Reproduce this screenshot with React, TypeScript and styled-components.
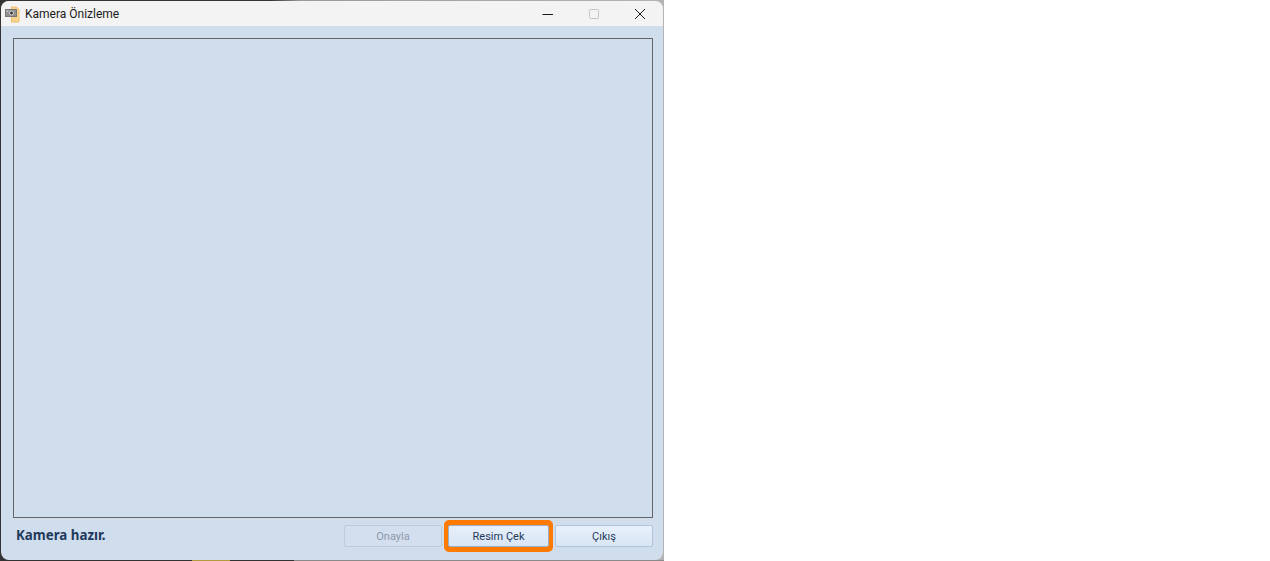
import React from 'react';
import styled, { createGlobalStyle } from 'styled-components';

const Global = createGlobalStyle`
  html, body {
    margin: 0;
    padding: 0;
    background: #fff;
  }
`;

const App: React.FC = () => (
  <>
    <Global />
    <Page>
      <Desktop>
        <Window>
          <TitleBar>
            <AppIcon />
            <Title>Kamera Önizleme</Title>
            <WindowControls>
              <ControlButton aria-label="Simge durumuna küçült">
                <svg width="12" height="12" viewBox="0 0 12 12"><path d="M0.5 6.5H11" stroke="#1a1a1a" fill="none" /></svg>
              </ControlButton>
              <ControlButton aria-label="Ekranı kapla">
                <svg width="12" height="12" viewBox="0 0 12 12"><rect x="1.5" y="1.5" width="9" height="9" rx="1" stroke="#c4c4c4" fill="none" /></svg>
              </ControlButton>
              <ControlButton aria-label="Kapat">
                <svg width="12" height="12" viewBox="0 0 12 12"><path d="M1 1L11 11M11 1L1 11" stroke="#1a1a1a" fill="none" /></svg>
              </ControlButton>
            </WindowControls>
          </TitleBar>
          <Body>
            <Preview />
            <Footer>
              <Status>Kamera hazır.</Status>
              <Actions>
                <ActionButton disabled>Onayla</ActionButton>
                <Highlight>
                  <ActionButton $focused>Resim Çek</ActionButton>
                </Highlight>
                <ActionButton>Çıkış</ActionButton>
              </Actions>
            </Footer>
          </Body>
        </Window>
      </Desktop>
    </Page>
  </>
);

const AppIcon: React.FC = () => (
  <IconBox>
    <svg width="16" height="18" viewBox="0 0 16 18">
      <path d="M6.5 2h5l2.5 2.5V17H6.5z" fill="#f8d18a" stroke="#efbf6e" strokeWidth="1" />
      <rect x="0.5" y="4.5" width="11" height="7" fill="#8f8f8f" stroke="#777" />
      <circle cx="6.5" cy="8" r="2" fill="#3a3a3a" stroke="#d8d8d8" />
      <rect x="1.5" y="5.5" width="2" height="1" fill="#ececec" />
    </svg>
  </IconBox>
);

const Page = styled.div`
  width: 1270px;
  height: 561px;
  overflow: hidden;
  background: #fff;
  font-family: Roboto, "Liberation Sans", sans-serif;
`;

/* what shows of the desktop behind the window's edges and round corners */
const Desktop = styled.div`
  width: 664px;
  height: 561px;
  box-sizing: border-box;
  padding: 1px;
  background:
    linear-gradient(90deg, #333 192px, #b39a3c 192px, #b39a3c 230px, #333 230px, #333 294px, #8a8a8a 294px) bottom / 100% 1px no-repeat,
    linear-gradient(90deg, #333 0, #333 270px, #9a9a9a 300px, #b4b4b4 100%);
`;

const Window = styled.div`
  width: 662px;
  height: 559px;
  display: flex;
  flex-direction: column;
  border-radius: 8px;
  overflow: hidden;
  background: #d0dded;
`;

const TitleBar = styled.div`
  height: 25px;
  flex: none;
  display: flex;
  align-items: center;
  background: #f3f3f3;
  padding-left: 4px;
`;

const IconBox = styled.span`
  display: flex;
  width: 16px;
  height: 18px;
`;

const Title = styled.span`
  margin-left: 4px;
  font-size: 12px;
  color: #1a1a1a;
`;

const WindowControls = styled.div`
  margin-left: auto;
  display: flex;
`;

const ControlButton = styled.button`
  width: 46px;
  height: 25px;
  padding: 0;
  border: 0;
  background: transparent;
  display: flex;
  align-items: center;
  justify-content: center;
`;

const Body = styled.div`
  flex: 1;
  min-height: 0;
  display: flex;
  flex-direction: column;
  padding: 12px 10px 6px 12px;
`;

const Preview = styled.div`
  flex: 1;
  border: 1px solid #646464;
  background: #d0dded;
`;

const Footer = styled.div`
  flex: none;
  height: 36px;
  display: flex;
  align-items: center;
  justify-content: space-between;
`;

const Status = styled.span`
  margin-left: 3px;
  margin-bottom: 2px;
  font-family: "Noto Sans", sans-serif;
  font-size: 13.3px;
  font-weight: 700;
  color: #1e395b;
`;

const Actions = styled.div`
  display: flex;
  align-items: center;
  gap: 2px;
`;

const Highlight = styled.div`
  padding: 5px 4px;
  border-radius: 5px;
  background: #ff7a00;
`;

const ActionButton = styled.button<{ $focused?: boolean }>`
  display: block;
  width: ${(p) => (p.$focused ? 101 : 98)}px;
  height: 22px;
  padding: 0;
  box-sizing: border-box;
  border: 1px solid ${(p) => (p.$focused ? '#9aafca' : '#b1c4db')};
  border-radius: 2px;
  background: linear-gradient(#e7f0fa, #d9e6f5);
  font-family: Roboto, "Liberation Sans", sans-serif;
  font-size: 11px;
  color: #1e395b;

  &:disabled {
    background: #d3dfee;
    border-color: #bccbde;
    color: #8d9aab;
  }
`;

export default App;
